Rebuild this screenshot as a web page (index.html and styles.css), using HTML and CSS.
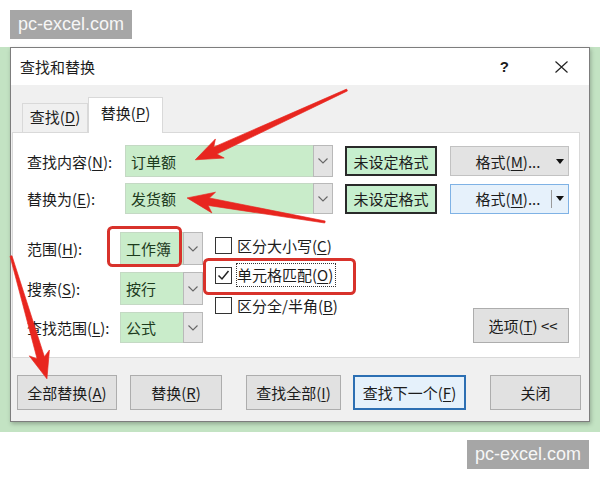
FILE: index.html
```html
<!DOCTYPE html>
<html lang="zh-CN">
<head>
<meta charset="utf-8">
<title>查找和替换</title>
<link rel="stylesheet" href="styles.css">
</head>
<body>
<div class="page">
  <div class="top"><span class="wm">pc-excel.com</span></div>
  <div class="desk">
    <div class="dialog">
      <div class="titlebar">
        <span class="title">查找和替换</span>
        <span class="help">?</span>
        <svg class="close" viewBox="0 0 13 12"><path d="M0.5 0.5 L12.5 11.5 M12.5 0.5 L0.5 11.5"/></svg>
      </div>
      <div class="body">
        <div class="tabs">
          <div class="tab">查找(<u>D</u>)</div>
          <div class="tab active">替换(<u>P</u>)</div>
        </div>
        <div class="panel">
          <div class="row r1">
            <span class="lbl">查找内容(<u>N</u>):</span>
            <div class="combo"><span class="val">订单额</span><span class="dd"><svg class="chev" viewBox="0 0 10 6"><polyline points="0.5,0.5 5,5 9.5,0.5"/></svg></span></div>
            <span class="fmtset">未设定格式</span>
            <span class="fmt"><span class="fmt-t">格式(<u>M</u>)...</span><span class="fmt-a"><span class="tri"></span></span></span>
          </div>
          <div class="row r2">
            <span class="lbl">替换为(<u>E</u>):</span>
            <div class="combo"><span class="val">发货额</span><span class="dd"><svg class="chev" viewBox="0 0 10 6"><polyline points="0.5,0.5 5,5 9.5,0.5"/></svg></span></div>
            <span class="fmtset">未设定格式</span>
            <span class="fmt hot"><span class="fmt-t">格式(<u>M</u>)...</span><span class="fmt-a"><span class="tri"></span></span></span>
          </div>
          <div class="lower">
            <div class="sels">
              <span class="lbl">范围(<u>H</u>):</span>
              <div class="sel"><span class="sv">工作簿</span><span class="dd"><svg class="chev" viewBox="0 0 10 6"><polyline points="0.5,0.5 5,5 9.5,0.5"/></svg></span></div>
              <span class="lbl">搜索(<u>S</u>):</span>
              <div class="sel"><span class="sv">按行</span><span class="dd"><svg class="chev" viewBox="0 0 10 6"><polyline points="0.5,0.5 5,5 9.5,0.5"/></svg></span></div>
              <span class="lbl">查找范围(<u>L</u>):</span>
              <div class="sel"><span class="sv">公式</span><span class="dd"><svg class="chev" viewBox="0 0 10 6"><polyline points="0.5,0.5 5,5 9.5,0.5"/></svg></span></div>
            </div>
            <div class="checks">
              <div class="chk"><span class="box"></span><span class="ct">区分大小写(<u>C</u>)</span></div>
              <div class="chk"><span class="box"><svg viewBox="0 0 15 15"><polyline points="2.5,7.5 6,11 12.5,3"/></svg></span><span class="ct focus">单元格匹配(<u>O</u>)</span></div>
              <div class="chk"><span class="box"></span><span class="ct">区分全/半角(<u>B</u>)</span></div>
            </div>
            <span class="btn opts">选项(<u>T</u>) &lt;&lt;</span>
          </div>
        </div>
        <div class="actions">
          <span class="btn b1">全部替换(<u>A</u>)</span>
          <span class="btn b2">替换(<u>R</u>)</span>
          <span class="btn b3">查找全部(<u>I</u>)</span>
          <span class="btn b4">查找下一个(<u>F</u>)</span>
          <span class="btn b5">关闭</span>
        </div>
      </div>
    </div>
  </div>
  <div class="bottom"><span class="wm">pc-excel.com</span></div>
  <svg class="annot" viewBox="0 0 600 480">
    <rect class="mark" x="108.5" y="227.5" width="72" height="38" rx="4"/>
    <rect class="mark" x="204.5" y="259.5" width="150" height="34" rx="4"/>
    <g transform="translate(347 90) rotate(155.3)"><polygon class="arrow" points="0,-1 145,-3.8 140,-10.5 167,0 140,10.5 145,3.8 0,1"/></g>
    <g transform="translate(325 222) rotate(189.9)"><polygon class="arrow" points="0,-1 118,-3.8 113,-10.5 140,0 113,10.5 118,3.8 0,1"/></g>
    <g transform="translate(11 256) rotate(73.7)"><polygon class="arrow" points="0,-1 106,-3.8 101,-10.5 128,0 101,10.5 106,3.8 0,1"/></g>
  </svg>
</div>
</body>
</html>
```

FILE: styles.css
```css
* { box-sizing: border-box; }
html, body { margin: 0; padding: 0; }
body {
  width: 600px;
  height: 480px;
  overflow: hidden;
  background: #fff;
  font-family: "Noto Sans CJK SC", "Noto Sans", sans-serif;
  font-size: 15px;
  color: #1c1c1c;
}
u { text-decoration: underline; text-underline-offset: 2px; }

.page { position: relative; width: 600px; height: 480px; }

.top { height: 47px; padding: 10px 0 0 10px; }
.wm {
  display: inline-block;
  width: 122px;
  height: 29px;
  line-height: 29px;
  background: #a6a6a6;
  color: #f6f6f6;
  font-family: "Liberation Sans", Arial, sans-serif;
  font-size: 18px;
  text-align: center;
}
.bottom { padding: 8px 11px 0 0; text-align: right; }

.desk { height: 385px; background: #c3e3c3; padding: 0 10px 10px; }

.dialog {
  height: 375px;
  border: 1px solid #7d7d7d;
  background: #f0f0f0;
  display: flex;
  flex-direction: column;
  box-shadow: 1px 2px 4px rgba(0, 0, 0, 0.25);
}

.titlebar {
  height: 37px;
  flex: none;
  background: #fff;
  display: flex;
  align-items: center;
  padding-left: 9px;
}
.title { flex: 1; }
.help {
  font-family: "Liberation Sans", Arial, sans-serif;
  font-weight: bold;
  font-size: 15px;
  margin-right: 46px;
}
.close { width: 13px; height: 12px; margin-right: 21px; fill: none; stroke: #222; stroke-width: 1.2; }

.body { flex: 1; padding-top: 12px; }

.tabs { display: flex; align-items: flex-end; height: 35px; padding-left: 11px; }
.tab {
  height: 29px;
  width: 66px;
  border: 1px solid #d9d9d9;
  border-bottom: none;
  background: #f0f0f0;
  display: flex;
  align-items: center;
  justify-content: center;
  padding-bottom: 4px;
}
.tab.active {
  position: relative;
  z-index: 1;
  height: 36px;
  width: 75px;
  margin-bottom: -1px;
  background: #fff;
  padding-bottom: 7px;
}

.panel {
  height: 226px;
  margin: 0 9px 0 1px;
  border: 1px solid #d9d9d9;
  background: #fff;
  padding: 12px 10px 0 14px;
}

.row { display: flex; align-items: center; height: 32px; }
.row.r2 { margin-top: 6px; height: 31px; }
.row .lbl { width: 98px; flex: none; }

.combo { display: flex; width: 208px; height: 100%; flex: none; }
.val {
  flex: 1;
  background: #c9ecca;
  border: 1px solid #c4d9c4;
  border-right: none;
  color: #1d3b1d;
  padding-left: 5px;
  display: flex;
  align-items: center;
}
.dd {
  width: 20px;
  flex: none;
  background: #e3e3e3;
  border: 1px solid #b9b9b9;
  display: flex;
  align-items: center;
  justify-content: center;
}
.chev { width: 10px; height: 6px; fill: none; stroke: #666; stroke-width: 1.1; }

.fmtset {
  margin-left: 12px;
  width: 92px;
  height: 30px;
  flex: none;
  border: 2px solid #2a2a2a;
  background: #c6efce;
  display: flex;
  align-items: center;
  justify-content: center;
}
.fmt {
  margin-left: 13px;
  width: 119px;
  height: 30px;
  flex: none;
  border: 1px solid #c2c2c2;
  background: #e3e3e3;
  display: flex;
  align-items: stretch;
}
.fmt.hot { background: #e6f1fb; border-color: #7fb2e5; }
.fmt-t { flex: 1; display: flex; align-items: center; justify-content: center; padding-left: 14px; }
.fmt-a { width: 17px; display: flex; align-items: center; justify-content: center; }
.fmt.hot .fmt-a { border-left: 1px solid #9a9a9a; margin: 5px 0; }
.tri { width: 0; height: 0; border-left: 4.5px solid transparent; border-right: 4.5px solid transparent; border-top: 5px solid #111; }

.lower { display: flex; margin-top: 18px; height: 111px; }
.sels {
  display: grid;
  grid-template-columns: 93px 83px;
  grid-template-rows: 33px 33px 31px;
  row-gap: 7px;
  align-items: center;
}
.sel { display: flex; height: 100%; }
.sv {
  width: 63px;
  background: #c9ecca;
  border: 1px solid #c4d9c4;
  border-right: none;
  color: #1d3b1d;
  padding-left: 5px;
  display: flex;
  align-items: center;
}

.checks { margin-left: 12px; display: flex; flex-direction: column; gap: 4px; }
.chk { height: 26px; display: flex; align-items: center; }
.box {
  width: 17px;
  height: 17px;
  border: 1px solid #333;
  margin-right: 5px;
  display: flex;
  background: #fff;
}
.box svg { width: 15px; height: 15px; fill: none; stroke: #222; stroke-width: 1.5; }
.ct.focus { outline: 1px dotted #333; outline-offset: 0; padding: 0 2px 0 0; line-height: 22px; }

.btn {
  display: flex;
  align-items: center;
  justify-content: center;
  height: 35px;
  background: #e1e1e1;
  border: 1px solid #adadad;
  flex: none;
}
.opts { margin-left: auto; align-self: flex-end; width: 96px; height: 35px; padding-left: 4px; }

.actions { display: flex; margin-top: 17px; padding-left: 6px; }
.b1 { width: 100px; }
.b2 { width: 92px; margin-left: 13px; }
.b3 { width: 95px; margin-left: 24px; }
.b4 { width: 113px; margin-left: 12px; border: 2px solid #2c6fb3; background: #e5f1fb; }
.b5 { width: 91px; margin-left: 24px; }

.annot { position: absolute; left: 0; top: 0; width: 600px; height: 480px; pointer-events: none; }
.mark { fill: none; stroke: #d8322b; stroke-width: 3; }
.arrow { fill: #e8261f; stroke: #e8261f; stroke-width: 0.6; stroke-linejoin: round; }
```
